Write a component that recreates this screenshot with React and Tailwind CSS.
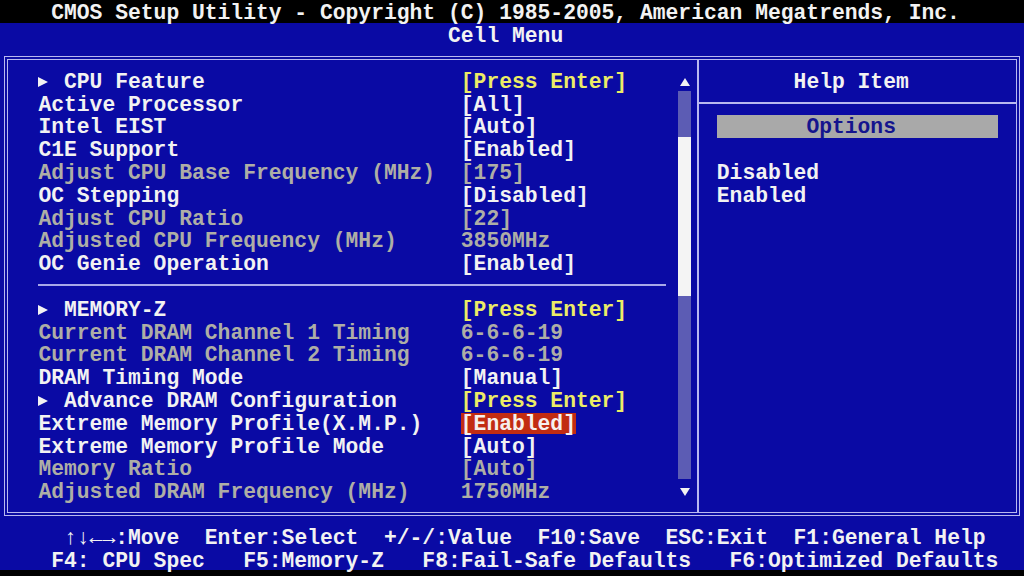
const ROW = "h-[22.8px] leading-[22.8px] pt-[2.4px]";

const Arrow = ({ dir }) => {
  const pts = {
    right: "0,0 10,5 0,10",
    up: "0,8 5,0 10,8",
    down: "0,0 10,0 5,8",
  };
  const size = dir === "right" ? "w-[10px] h-[10px]" : "w-[10px] h-[8px]";
  const box = dir === "right" ? "0 0 10 10" : "0 0 10 8";
  return (
    <svg viewBox={box} className={size}>
      <polygon points={pts[dir]} fill="#f2f2f2" />
    </svg>
  );
};

const App = () => {
  const cpuItems = [
    { label: "CPU Feature", value: "[Press Enter]", sub: true },
    { label: "Active Processor", value: "[All]" },
    { label: "Intel EIST", value: "[Auto]" },
    { label: "C1E Support", value: "[Enabled]" },
    { label: "Adjust CPU Base Frequency (MHz)", value: "[175]", dim: true },
    { label: "OC Stepping", value: "[Disabled]" },
    { label: "Adjust CPU Ratio", value: "[22]", dim: true },
    { label: "Adjusted CPU Frequency (MHz)", value: "3850MHz", dim: true },
    { label: "OC Genie Operation", value: "[Enabled]" },
  ];

  const memItems = [
    { label: "MEMORY-Z", value: "[Press Enter]", sub: true },
    { label: "Current DRAM Channel 1 Timing", value: "6-6-6-19", dim: true },
    { label: "Current DRAM Channel 2 Timing", value: "6-6-6-19", dim: true },
    { label: "DRAM Timing Mode", value: "[Manual]" },
    { label: "Advance DRAM Configuration", value: "[Press Enter]", sub: true },
    { label: "Extreme Memory Profile(X.M.P.)", value: "[Enabled]", selected: true },
    { label: "Extreme Memory Profile Mode", value: "[Auto]" },
    { label: "Memory Ratio", value: "[Auto]", dim: true },
    { label: "Adjusted DRAM Frequency (MHz)", value: "1750MHz", dim: true },
  ];

  const renderRow = (item, i) => {
    const labelColor = item.dim ? "text-[#aeaea6]" : "text-[#f2f2f2]";
    let valueColor = item.dim ? "text-[#aeaea6]" : "text-[#f2f2f2]";
    if (item.sub) valueColor = "text-[#ecec66]";
    return (
      <div key={i} className={`flex ${ROW}`}>
        <div className={`w-[422.4px] flex ${labelColor}`}>
          {item.sub && (
            <span className="w-[25.6px] h-[22.8px] flex items-center">
              <Arrow dir="right" />
            </span>
          )}
          <span>{item.label}</span>
        </div>
        <div>
          <span
            className={
              item.selected
                ? "bg-[#c22c12] text-[#f6f0ee] inline-block h-[21.5px] align-top"
                : valueColor
            }
          >
            {item.value}
          </span>
        </div>
      </div>
    );
  };

  return (
    <div className="w-[1024px] h-[576px] bg-black overflow-hidden whitespace-pre font-['Liberation_Mono','DejaVu_Sans_Mono',monospace] text-[21.33px] font-bold text-[#f2f2f2]">
      <div className={`${ROW} pl-[51.2px] bg-black`}>
        CMOS Setup Utility - Copyright (C) 1985-2005, American Megatrends, Inc.
      </div>
      <div className={`${ROW} pl-[448px] bg-[#0a0aa4]`}>Cell Menu</div>

      <div className="h-[478.8px] bg-[#0a0aa4] pt-[10.4px] px-[4.4px]">
        <div className="h-[459.6px] border-4 border-double border-[#b8b8f0] flex">
          {/* left: settings list + scrollbar */}
          <div className="flex pt-[8.4px]">
            <div className="w-[670px] pl-[30px]">
              {cpuItems.map(renderRow)}
              <div className="h-[22.8px] flex items-center pt-[1px]">
                <div className="w-[627.2px] h-[2px] bg-[#a8a8e8]" />
              </div>
              {memItems.map(renderRow)}
            </div>
            <div className="w-[12.8px] flex flex-col">
              <div className="h-[22.8px] pt-[4px] flex items-center justify-center">
                <Arrow dir="up" />
              </div>
              <div className="h-[45.6px] bg-[#5c5cb4]" />
              <div className="h-[159.6px] bg-[#f4f4f4]" />
              <div className="h-[182.4px] bg-[#5c5cb4]" />
              <div className="h-[22.8px] pt-[4px] flex items-center justify-center">
                <Arrow dir="down" />
              </div>
            </div>
            <div className="w-[5.8px]" />
          </div>

          <div className="w-[2px] bg-[#b8b8f0]" />

          {/* right: help */}
          <div className="flex-1 pt-[8.4px]">
            <div className={`${ROW} pl-[94.6px]`}>Help Item</div>
            <div className="h-[22.8px] flex items-center pt-[1px]">
              <div className="w-full h-[2px] bg-[#b8b8f0]" />
            </div>
            <div className="h-[22.8px] mt-[1px] leading-[22.8px] pt-[1.4px] ml-[17.8px] w-[281.6px] pl-[89.6px] bg-[#a9a9a9] text-[#14148e]">
              Options
            </div>
            <div className="h-[21.8px]" />
            <div className={ROW + " pl-[17.8px]"}>Disabled</div>
            <div className={ROW + " pl-[17.8px]"}>Enabled</div>
          </div>
        </div>
      </div>

      <div className="bg-[#0a0aa4] h-[45.6px]">
        <div className={`${ROW} pl-[64px]`}>
          ↑↓←→:Move  Enter:Select  +/-/:Value  F10:Save  ESC:Exit  F1:General Help
        </div>
        <div className={`${ROW} pl-[51.2px]`}>
          F4: CPU Spec   F5:Memory-Z   F8:Fail-Safe Defaults   F6:Optimized Defaults
        </div>
      </div>
    </div>
  );
};

export default App;
